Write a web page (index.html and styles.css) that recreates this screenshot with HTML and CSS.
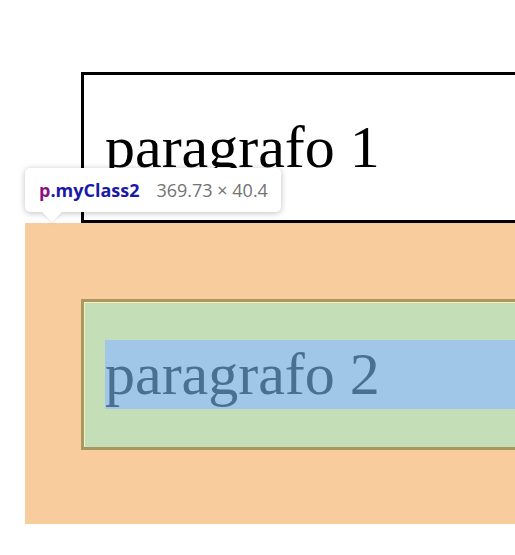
FILE: index.html
```html
<!DOCTYPE html>
<html lang="it">
<head>
<meta charset="utf-8">
<title>paragrafi</title>
<link rel="stylesheet" href="styles.css">
</head>
<body>
<p class="p1">paragrafo 1</p>
<div class="margin-box">
  <div class="border-box">
    <div class="pad-box">
      <p class="content">paragrafo 2</p>
    </div>
  </div>
</div>
<div class="tooltip">
  <span class="tag">p</span><span class="cls">.myClass2</span>
  <span class="dims">369.73 × 40.4</span>
  <span class="arrow"></span>
</div>
</body>
</html>
```
FILE: styles.css
```css
html, body {
  margin: 0;
  padding: 0;
  background: #fff;
  overflow: hidden;
}
body {
  width: 515px;
  height: 555px;
  position: relative;
}
.p1 {
  margin: 72px 0 0 81px;
  border: 3px solid #000;
  border-right: none;
  padding: 38px 0 38px 21px;
  font-family: "Liberation Serif", "Times New Roman", serif;
  font-size: 60px;
  line-height: 69px;
  color: #000;
  white-space: nowrap;
}
.margin-box {
  margin-left: 25px;
  background: #f9cc9d;
  padding: 76px 0 74px 56px;
}
.border-box {
  border-top: 3px solid #a8975f;
  border-left: 3px solid #a8975f;
  border-bottom: 3px solid #a8975f;
}
.pad-box {
  background: #c4deb8;
  border-top: 1px solid #ffeebc;
  border-left: 1px solid #ffeebc;
  padding: 37px 0 38px 20px;
}
.content {
  margin: 0;
  background: #a0c6e8;
  color: #496f91;
  font-family: "Liberation Serif", "Times New Roman", serif;
  font-size: 60px;
  line-height: 69px;
  white-space: nowrap;
}
.tooltip {
  position: absolute;
  left: 25px;
  top: 168px;
  width: 256px;
  height: 44px;
  box-sizing: border-box;
  padding: 0 0 1px 14px;
  background: #fff;
  border-radius: 5px;
  box-shadow: 0 1px 6px rgba(0, 0, 0, 0.25);
  display: flex;
  align-items: center;
  font-family: "Open Sans", "Noto Sans", sans-serif;
  white-space: nowrap;
}
.tag {
  color: #881280;
  font-weight: 700;
  font-size: 18px;
}
.cls {
  color: #1a1aa6;
  font-weight: 700;
  font-size: 18px;
}
.dims {
  color: #737373;
  margin-left: 17px;
  font-size: 18px;
}
.arrow {
  position: absolute;
  left: 17px;
  top: 44px;
  width: 0;
  height: 0;
  border-left: 10px solid transparent;
  border-right: 10px solid transparent;
  border-top: 10px solid #fff;
  filter: drop-shadow(0 2px 1px rgba(0, 0, 0, 0.08));
}
```
